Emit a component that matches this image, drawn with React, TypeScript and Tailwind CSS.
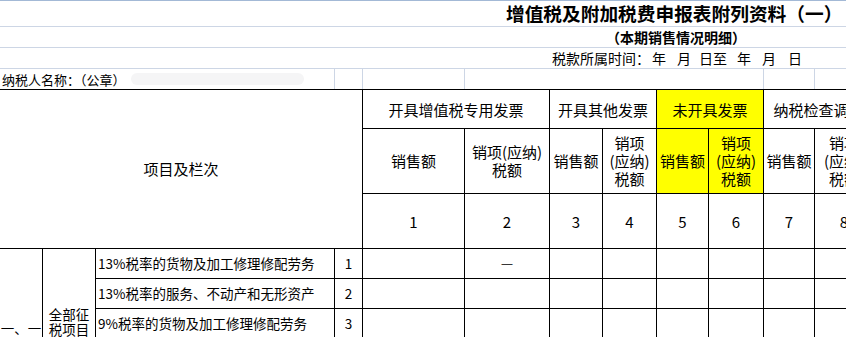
import React from "react";

const FONT = "font-['Noto_Sans_CJK_SC','Noto_Sans',sans-serif]";

function Head({
  children,
  yellow,
  className = "",
}: {
  children: React.ReactNode;
  yellow?: boolean;
  className?: string;
}) {
  return (
    <div
      className={`flex items-center justify-center text-center text-[15px] leading-[18px] text-black ${
        yellow ? "bg-[#ffff00]" : "bg-white"
      } ${className}`}
    >
      {children}
    </div>
  );
}

export default function App() {
  const rows = [
    "13%税率的货物及加工修理修配劳务",
    "13%税率的服务、不动产和无形资产",
    "9%税率的货物及加工修理修配劳务",
  ];

  return (
    <div className={`h-[337px] w-[846px] overflow-hidden bg-white text-black ${FONT}`}>
      {/* 表头标题区 */}
      <div className="flex h-[27px] items-center whitespace-nowrap border-y border-t-[#a3b9d6] border-b-[#cdd6e5] pl-[506px] text-[18.7px] font-bold leading-none">
        增值税及附加税费申报表附列资料（一）
      </div>
      <div className="flex h-[21px] items-center whitespace-nowrap border-b border-[#cdd6e5] pl-[606px] text-[14px] font-bold leading-none">
        （本期销售情况明细）
      </div>
      <div className="flex h-[21px] items-center whitespace-nowrap border-b border-[#cdd6e5] pl-[552px] text-[14px] leading-none">
        <span>税款所属时间：</span>
        <span className="ml-[2px]">年</span>
        <span className="ml-[11px]">月</span>
        <span className="ml-[8px]">日至</span>
        <span className="ml-[10px]">年</span>
        <span className="ml-[11px]">月</span>
        <span className="ml-[12px]">日</span>
      </div>
      <div className="flex h-[20px] text-[13px] leading-none">
        <div className="flex w-[335px] items-center whitespace-nowrap border-r border-[#cdd6e5] pl-[2px]">
          <span>纳税人名称：（公章）</span>
          <span className="ml-[5px] h-[12px] w-[173px] rounded-full bg-[#f5f5f6]" />
        </div>
        <div className="w-[28px] border-r border-[#cdd6e5]" />
        <div className="w-[102px] border-r border-[#cdd6e5]" />
        <div className="w-[299px] border-r border-[#cdd6e5]" />
        <div className="w-[51px] border-r border-[#cdd6e5]" />
        <div className="flex-1" />
      </div>

      {/* 主表格 */}
      <div className="grid w-max grid-cols-[42px_52px_238px_27px_101px_84px_52px_53px_51px_54px_50px_58px] grid-rows-[38px_64px_54px_29px_29px_29px] gap-px border-t border-black bg-black">
        <div className="col-span-4 row-span-3 flex items-center justify-center bg-white text-[15px]">
          项目及栏次
        </div>
        <Head className="col-span-2 pt-[2px]">开具增值税专用发票</Head>
        <Head className="col-span-2 pt-[2px]">开具其他发票</Head>
        <Head className="col-span-2 pt-[2px]" yellow>未开具发票</Head>
        <Head className="col-span-2 pt-[2px] whitespace-nowrap">纳税检查调整</Head>

        <Head>销售额</Head>
        <Head>销项(应纳)<br />税额</Head>
        <Head>销售额</Head>
        <Head>销项<br />(应纳)<br />税额</Head>
        <Head yellow>销售额</Head>
        <Head yellow>销项<br />(应纳)<br />税额</Head>
        <Head>销售额</Head>
        <Head>销项<br />(应纳)<br />税额</Head>

        {[1, 2, 3, 4, 5, 6, 7, 8].map((n) => (
          <div key={n} className="flex items-center justify-center bg-white pt-[2px] text-[15px]">
            {n}
          </div>
        ))}

        <div className="row-span-3 whitespace-nowrap bg-white pt-[72px] text-center text-[13.5px] leading-[15px]">
          一、一
        </div>
        <div className="row-span-3 bg-white pt-[58px] text-center text-[13.5px] leading-[15px]">
          全部征
          <br />
          税项目
        </div>
        {rows.map((label, i) => (
          <React.Fragment key={label}>
            <div className="flex items-center whitespace-nowrap bg-white pl-[2px] text-[13.5px]">
              {label}
            </div>
            <div className="flex items-center justify-center bg-white text-[13.5px]">{i + 1}</div>
            {Array.from({ length: 8 }).map((_, c) => (
              <div
                key={c}
                className="flex items-center justify-center bg-white pb-[1px] font-['Liberation_Sans',sans-serif] text-[11px] leading-none"
              >
                {i === 0 && c === 1 ? "—" : ""}
              </div>
            ))}
          </React.Fragment>
        ))}
      </div>
    </div>
  );
}
